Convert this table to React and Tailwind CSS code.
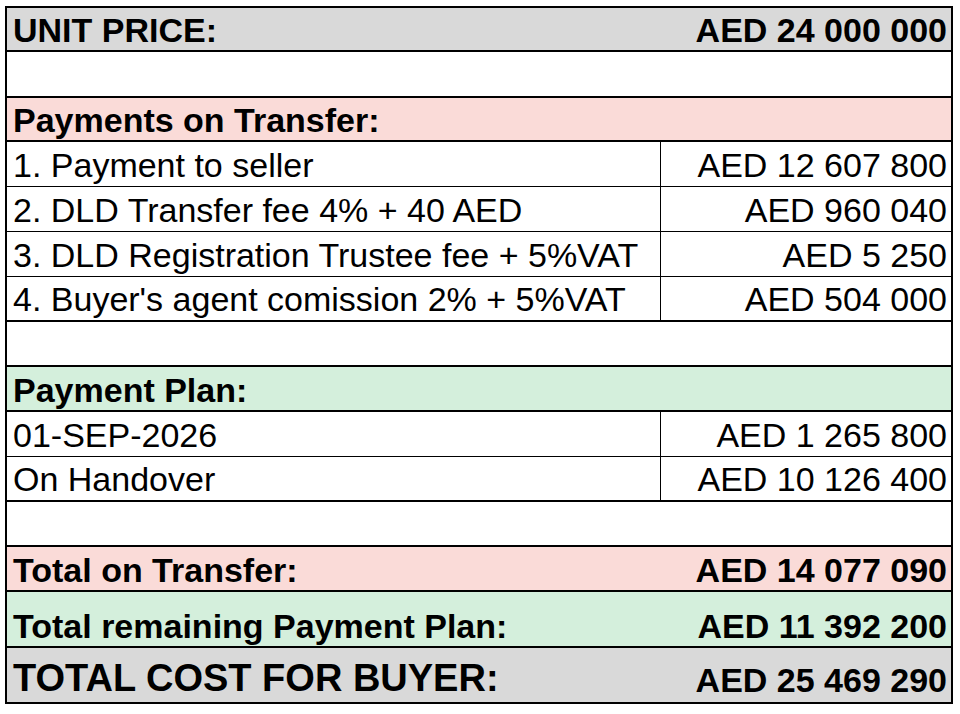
import React from 'react';

// heights include the bottom border (border-box)
const rows = [
    { label: 'UNIT PRICE:', value: 'AED 24 000 000', bold: true, bg: 'bg-[#d9d9d9]', h: 'h-[44px]', b: 'border-b-2', pb: 'pb-[3px]' },
    { blank: true, h: 'h-[46px]', b: 'border-b-2' },
    { label: 'Payments on Transfer:', bold: true, bg: 'bg-[#fadbd8]', h: 'h-[44px]', b: 'border-b-2', pb: 'pb-[3px]' },
    { label: '1. Payment to seller', value: 'AED 12 607 800', split: true, h: 'h-[45px]', b: 'border-b', pb: 'pb-[4px]' },
    { label: '2. DLD Transfer fee 4% + 40 AED', value: 'AED 960 040', split: true, h: 'h-[45px]', b: 'border-b', pb: 'pb-[4px]' },
    { label: '3. DLD Registration Trustee fee + 5%VAT', value: 'AED 5 250', split: true, h: 'h-[45px]', b: 'border-b', pb: 'pb-[4px]' },
    { label: "4. Buyer's agent comission 2% + 5%VAT", value: 'AED 504 000', split: true, h: 'h-[45px]', b: 'border-b-2', pb: 'pb-[4px]' },
    { blank: true, h: 'h-[45px]', b: 'border-b-2' },
    { label: 'Payment Plan:', bold: true, bg: 'bg-[#d4efdc]', h: 'h-[45px]', b: 'border-b-2', pb: 'pb-[3px]' },
    { label: '01-SEP-2026', value: 'AED 1 265 800', split: true, h: 'h-[45px]', b: 'border-b', pb: 'pb-[4px]' },
    { label: 'On Handover', value: 'AED 10 126 400', split: true, h: 'h-[45px]', b: 'border-b-2', pb: 'pb-[4px]' },
    { blank: true, h: 'h-[45px]', b: 'border-b-2' },
    { label: 'Total on Transfer:', value: 'AED 14 077 090', bold: true, bg: 'bg-[#fadbd8]', h: 'h-[45px]', b: 'border-b-2', pb: 'pb-[3px]' },
    { label: 'Total remaining Payment Plan:', value: 'AED 11 392 200', bold: true, bg: 'bg-[#d4efdc]', h: 'h-[56px]', b: 'border-b-2', pb: 'pb-[3px]' },
    { label: 'TOTAL COST FOR BUYER:', value: 'AED 25 469 290', bold: true, big: true, bg: 'bg-[#d9d9d9]', h: 'h-[54px]', b: '', pb: 'pb-[5px]' },
];

const Row = ({ r }) => {
    if (r.blank) {
        return <div className={`${r.h} ${r.b} border-black bg-white`} />;
    }
    const weight = r.bold ? 'font-bold' : 'font-normal';
    return (
        <div className={`${r.h} ${r.b} ${r.bg || 'bg-white'} border-black flex`}>
            <div className={`${r.split ? 'w-[654px] border-r border-black shrink-0' : 'flex-1'} flex items-end pl-[6px] ${r.pb}`}>
                <span className={`${weight} ${r.big ? 'text-[38px]' : 'text-[34px]'} leading-none whitespace-nowrap`}>
                    {r.label}
                </span>
            </div>
            {r.value && (
                <div className={`${r.split ? 'flex-1' : 'shrink-0'} flex items-end justify-end pr-[4px] ${r.pb}`}>
                    <span className={`${weight} text-[34px] leading-none whitespace-nowrap`}>{r.value}</span>
                </div>
            )}
        </div>
    );
};

export default function App() {
    return (
        <div className="w-[960px] h-[714px] bg-white pt-[6px] pl-[5px] text-black font-['Liberation_Sans',Arial,sans-serif]">
            <div className="w-[948px] border-2 border-black flex flex-col">
                {rows.map((r, i) => (
                    <Row key={i} r={r} />
                ))}
            </div>
        </div>
    );
}
